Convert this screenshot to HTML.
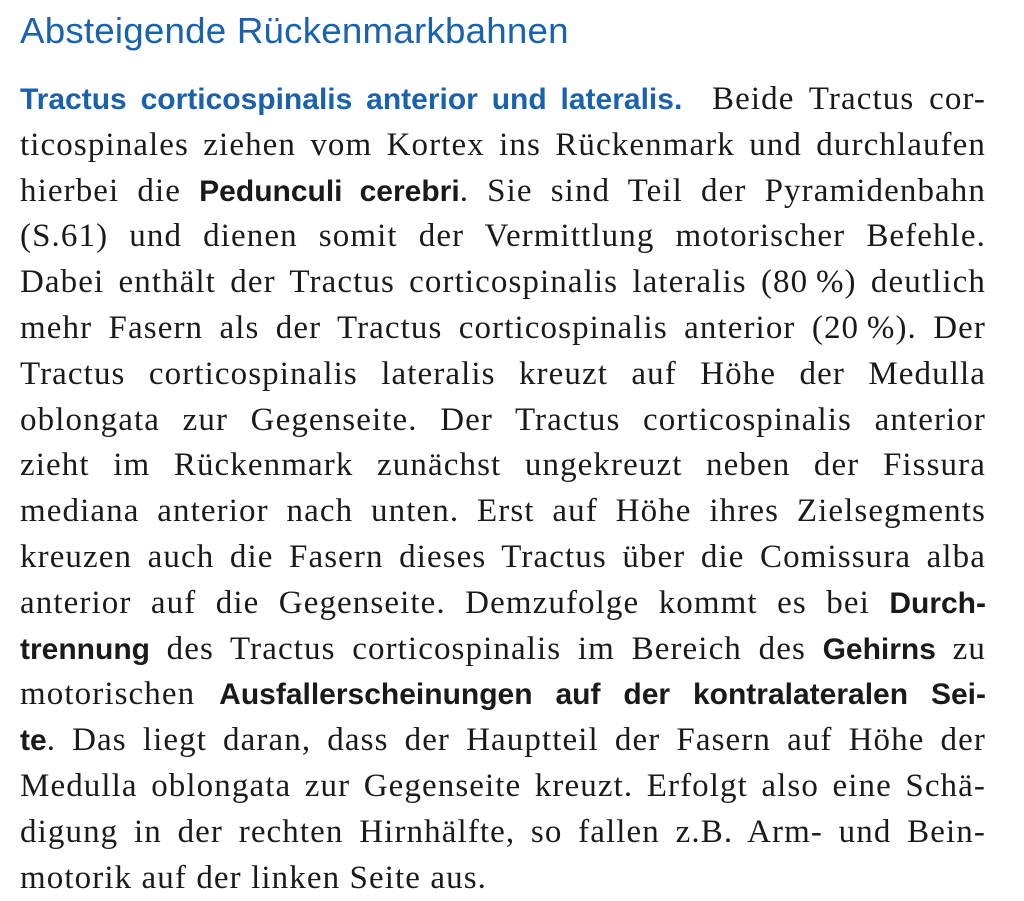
<!DOCTYPE html>
<html><head><meta charset="utf-8"><style>
html,body{margin:0;padding:0;background:#fff;width:1024px;height:898px;overflow:hidden}
h1{position:absolute;left:20px;top:10px;margin:0;font:36px "Liberation Sans",sans-serif;color:#1a62ad;letter-spacing:0.2px;transform:scaleX(1.02);transform-origin:left}
.t{position:absolute;left:20px;top:77px;width:966px;font:33px/45.8px "Liberation Serif",serif;color:#1a1a1a;letter-spacing:1.1px}
.l{display:block;height:45.8px;text-align:justify;text-align-last:justify;white-space:nowrap}
.last{text-align-last:left}
b{font-family:"Liberation Sans",sans-serif;font-size:30px;font-weight:bold;line-height:1;letter-spacing:0}
.bl{color:#1a62ad}
</style></head><body>
<h1>Absteigende Rückenmarkbahnen</h1>
<div class="t">
<span class="l"><b class="bl">Tractus corticospinalis anterior und lateralis.</b>&nbsp; Beide Tractus cor-</span>
<span class="l">ticospinales ziehen vom Kortex ins Rückenmark und durchlaufen</span>
<span class="l">hierbei die <b>Pedunculi cerebri</b>. Sie sind Teil der Pyramidenbahn</span>
<span class="l">(S.61) und dienen somit der Vermittlung motorischer Befehle.</span>
<span class="l">Dabei enthält der Tractus corticospinalis lateralis (80&#8201;%) deutlich</span>
<span class="l">mehr Fasern als der Tractus corticospinalis anterior (20&#8201;%). Der</span>
<span class="l">Tractus corticospinalis lateralis kreuzt auf Höhe der Medulla</span>
<span class="l">oblongata zur Gegenseite. Der Tractus corticospinalis anterior</span>
<span class="l">zieht im Rückenmark zunächst ungekreuzt neben der Fissura</span>
<span class="l">mediana anterior nach unten. Erst auf Höhe ihres Zielsegments</span>
<span class="l">kreuzen auch die Fasern dieses Tractus über die Comissura alba</span>
<span class="l">anterior auf die Gegenseite. Demzufolge kommt es bei <b>Durch-</b></span>
<span class="l"><b>trennung</b> des Tractus corticospinalis im Bereich des <b>Gehirns</b> zu</span>
<span class="l">motorischen <b>Ausfallerscheinungen auf der kontralateralen Sei-</b></span>
<span class="l"><b>te</b>. Das liegt daran, dass der Hauptteil der Fasern auf Höhe der</span>
<span class="l">Medulla oblongata zur Gegenseite kreuzt. Erfolgt also eine Schä-</span>
<span class="l">digung in der rechten Hirnhälfte, so fallen z.B. Arm- und Bein-</span>
<span class="l last">motorik auf der linken Seite aus.</span>
</div>
</body></html>
